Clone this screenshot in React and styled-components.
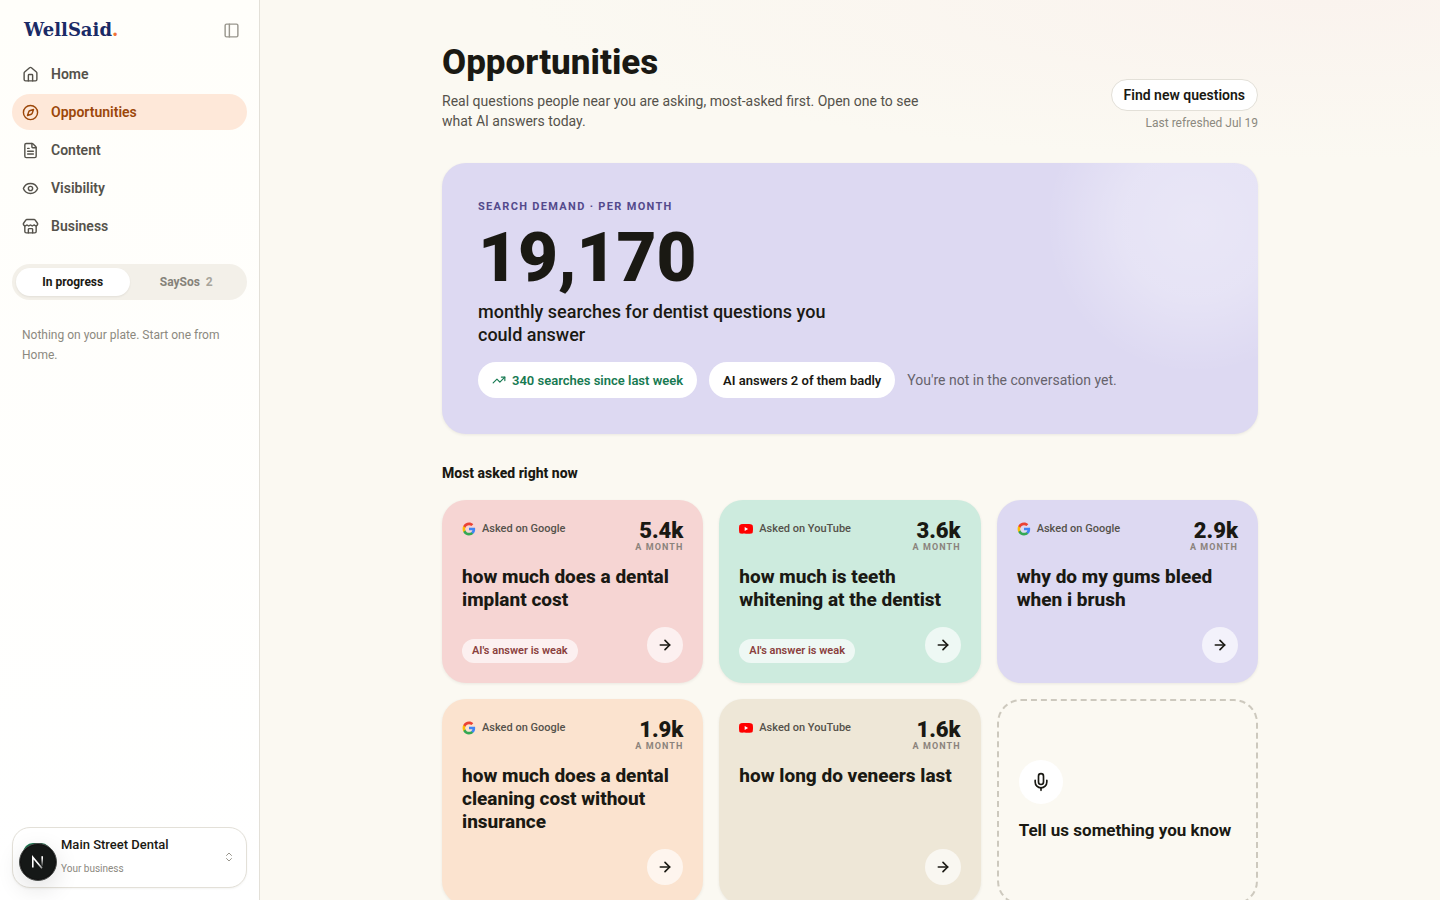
import React from 'react';
import styled, { createGlobalStyle, ThemeProvider } from 'styled-components';
import {
  ArrowRight,
  ChevronsUpDown,
  Compass,
  Eye,
  FileText,
  House,
  Mic,
  PanelLeft,
  Store,
  TrendingUp,
} from 'lucide-react';

const theme = {
  font: "Roboto, 'Liberation Sans', sans-serif",
  serif: "'DejaVu Serif', 'Liberation Serif', serif",
  ink: '#1a1913',
  inkSoft: '#55524b',
  inkMuted: '#8c897f',
  line: '#e3e0d8',
  page: '#fbf9f2',
  navy: '#1a2a66',
  accent: '#f07338',
  activeBg: '#fee8d9',
  activeText: '#9c4709',
  lavender: '#ddd9f2',
  pink: '#f6d5d3',
  mint: '#cdebde',
  peach: '#fbe3cf',
  sand: '#eee7d7',
};

const GlobalStyle = createGlobalStyle`
  *, *::before, *::after {
    box-sizing: border-box;
  }

  body {
    margin: 0;
    font-family: ${theme.font};
    color: ${theme.ink};
    background: ${theme.page};
  }

  button {
    font-family: inherit;
    color: inherit;
    border: 0;
    padding: 0;
    background: none;
    cursor: pointer;
  }

  h1, h2, h3, p {
    margin: 0;
  }
`;

const Shell = styled.div`
  display: flex;
  height: 100vh;
`;

/* ---------- sidebar ---------- */

const Sidebar = styled.aside`
  display: flex;
  flex-direction: column;
  flex: 0 0 260px;
  padding: 12px;
  background: linear-gradient(#fffefa, #ffffff);
  border-right: 1px solid ${({ theme }) => theme.line};
`;

const SidebarHeader = styled.div`
  display: flex;
  align-items: center;
  justify-content: space-between;
  height: 36px;
  margin-bottom: 8px;
  padding-left: 12px;
`;

const Wordmark = styled.a`
  font-family: ${({ theme }) => theme.serif};
  font-size: 18px;
  font-weight: 700;
  line-height: 28px;
  color: ${({ theme }) => theme.navy};
  text-decoration: none;

  span {
    color: ${({ theme }) => theme.accent};
  }
`;

const CollapseButton = styled.button`
  display: grid;
  place-items: center;
  width: 32px;
  height: 32px;
  color: #99968d;
`;

const Nav = styled.nav`
  display: flex;
  flex-direction: column;
  gap: 2px;
`;

const NavLink = styled.a`
  display: flex;
  align-items: center;
  gap: 12px;
  height: 36px;
  padding: 0 10px;
  border-radius: 18px;
  font-size: 14px;
  font-weight: 600;
  text-decoration: none;
  color: ${({ theme, $active }) => ($active ? theme.activeText : theme.inkSoft)};
  background: ${({ theme, $active }) => ($active ? theme.activeBg : 'transparent')};
`;

const Segmented = styled.div`
  display: flex;
  margin-top: 20px;
  padding: 4px;
  border-radius: 18px;
  background: #f3f0e9;
`;

const Segment = styled.button`
  flex: 1 1 0;
  height: 28px;
  border-radius: 14px;
  font-size: 12px;
  font-weight: 700;
  color: ${({ theme, $active }) => ($active ? theme.ink : '#85827a')};
  background: ${({ $active }) => ($active ? '#ffffff' : 'transparent')};
  box-shadow: ${({ $active }) => ($active ? '0 1px 2px rgba(40, 35, 20, 0.08)' : 'none')};
`;

const SegmentCount = styled.span`
  margin-left: 6px;
  color: #a8a59c;
`;

const EmptyNote = styled.p`
  margin-top: 25px;
  padding: 0 10px;
  font-size: 12px;
  line-height: 20px;
  color: ${({ theme }) => theme.inkMuted};
`;

const AccountButton = styled.button`
  display: flex;
  align-items: center;
  gap: 10px;
  margin-top: auto;
  padding: 8px 11px 9px 10px;
  border: 1px solid ${({ theme }) => theme.line};
  border-radius: 18px;
  text-align: left;
  background: #ffffff;
  box-shadow: 0 1px 2px rgba(40, 35, 20, 0.05);

  svg {
    margin-left: auto;
    color: #99968d;
  }
`;

const Avatar = styled.span`
  width: 28px;
  height: 28px;
  border-radius: 10px;
  background: #14794f;
`;

const AccountText = styled.span`
  display: flex;
  flex-direction: column;
  gap: 6px;
`;

const AccountName = styled.span`
  font-size: 13px;
  font-weight: 500;
  line-height: 18px;
`;

const AccountMeta = styled.span`
  font-size: 10px;
  line-height: 18px;
  color: ${({ theme }) => theme.inkMuted};
`;

/* floats above the page in the bottom left corner */
const DevBadge = styled.button`
  position: fixed;
  left: 19px;
  bottom: 19px;
  display: grid;
  place-items: center;
  width: 38px;
  height: 38px;
  border: 1px solid #4a4d4b;
  border-radius: 50%;
  background: #151817;
  box-shadow: 0 0 0 1px #111111 inset, 0 8px 24px rgba(0, 0, 0, 0.12);
`;

/* ---------- main column ---------- */

const Main = styled.main`
  flex: 1 1 0;
  min-width: 0;
  overflow-y: auto;
  scrollbar-width: none;
  background:
    radial-gradient(ellipse 800px 160px at 90% 0, #faf3ee, rgba(250, 243, 238, 0)),
    ${({ theme }) => theme.page};
`;

const Content = styled.div`
  max-width: 880px;
  margin: 0 auto;
  padding: 40px 32px;
`;

const PageHeader = styled.header`
  display: flex;
  align-items: flex-end;
  justify-content: space-between;
  gap: 24px;
  margin-bottom: 32px;
`;

const PageTitle = styled.h1`
  font-size: 35px;
  font-weight: 800;
  line-height: 45px;
`;

const PageIntro = styled.p`
  max-width: 490px;
  margin-top: 6px;
  font-size: 14px;
  line-height: 20px;
  color: ${({ theme }) => theme.inkSoft};
`;

const HeaderActions = styled.div`
  display: flex;
  flex-direction: column;
  align-items: flex-end;
  gap: 4px;
`;

const OutlineButton = styled.button`
  height: 32px;
  padding: 0 12px;
  border: 1px solid ${({ theme }) => theme.line};
  border-radius: 16px;
  font-size: 14px;
  font-weight: 600;
  background: #ffffff;
`;

const Refreshed = styled.span`
  font-size: 12px;
  line-height: 16px;
  color: ${({ theme }) => theme.inkMuted};
`;

const Hero = styled.section`
  padding: 36px;
  border-radius: 24px;
  background:
    radial-gradient(
      circle 150px at calc(100% - 62px) 60px,
      rgba(255, 255, 255, 0.36),
      rgba(255, 255, 255, 0.28) 50%,
      rgba(255, 255, 255, 0)
    ),
    ${({ theme }) => theme.lavender};
  box-shadow: 0 1px 3px rgba(40, 35, 20, 0.08);
`;

const Eyebrow = styled.p`
  font-size: 11px;
  font-weight: 700;
  line-height: 15px;
  letter-spacing: 0.12em;
  text-transform: uppercase;
  color: #534a8c;
`;

const HeroNumber = styled.p`
  margin-top: 8px;
  font-size: 69px;
  font-weight: 900;
  line-height: 72px;
`;

const HeroText = styled.p`
  max-width: 384px;
  margin: 6px 0 16px;
  font-size: 18px;
  font-weight: 500;
  line-height: 23px;
`;

const HeroFacts = styled.div`
  display: flex;
  flex-wrap: wrap;
  align-items: center;
  gap: 12px;
`;

const FactPill = styled.span`
  display: inline-flex;
  align-items: center;
  gap: 6px;
  height: 36px;
  padding: 0 14px;
  border-radius: 18px;
  font-size: 13px;
  font-weight: 600;
  color: ${({ theme, $up }) => ($up ? '#177a52' : theme.ink)};
  background: #ffffff;
`;

const FactNote = styled.span`
  font-size: 14px;
  color: #66636c;
`;

const SectionTitle = styled.h2`
  margin: 29px 0 17px;
  font-size: 14px;
  font-weight: 800;
  line-height: 20px;
`;

const CardGrid = styled.div`
  display: grid;
  grid-template-columns: repeat(3, minmax(0, 1fr));
  gap: 16px;
`;

const Card = styled.article`
  display: flex;
  flex-direction: column;
  padding: 20px;
  border-radius: 24px;
  background: ${({ theme, $tone }) => theme[$tone]};
  box-shadow: 0 1px 3px rgba(40, 35, 20, 0.08);
`;

const CardTop = styled.div`
  display: flex;
  align-items: flex-start;
  justify-content: space-between;
`;

const Source = styled.span`
  display: flex;
  align-items: center;
  gap: 6px;
  font-size: 11px;
  font-weight: 500;
  line-height: 18px;
  color: ${({ theme }) => theme.inkSoft};
`;

const Volume = styled.div`
  text-align: right;
`;

const VolumeNumber = styled.div`
  font-size: 22px;
  font-weight: 900;
  line-height: 22px;
`;

const VolumeUnit = styled.div`
  font-size: 9px;
  font-weight: 700;
  line-height: 11px;
  letter-spacing: 0.12em;
  text-transform: uppercase;
  color: #8b837c;
`;

const Question = styled.h3`
  margin: 12px 0 16px;
  font-size: 19px;
  font-weight: 800;
  line-height: 23px;
`;

const CardBottom = styled.div`
  display: flex;
  align-items: flex-end;
  justify-content: space-between;
  margin-top: auto;
`;

const WeakTag = styled.span`
  padding: 0 10px;
  border-radius: 12px;
  font-size: 11px;
  font-weight: 600;
  line-height: 24px;
  color: #8a403d;
  background: rgba(255, 255, 255, 0.65);
`;

const OpenButton = styled.button`
  display: grid;
  place-items: center;
  width: 36px;
  height: 36px;
  margin-left: auto;
  border-radius: 50%;
  background: rgba(255, 255, 255, 0.65);
`;

const TellCard = styled.button`
  display: flex;
  flex-direction: column;
  align-items: flex-start;
  justify-content: center;
  gap: 16px;
  padding: 20px 20px 23px;
  border: 2px dashed #cdc9be;
  border-radius: 24px;
  font-size: 17px;
  font-weight: 700;
  line-height: 21px;
  text-align: left;
`;

const MicCircle = styled.span`
  display: grid;
  place-items: center;
  width: 44px;
  height: 44px;
  border-radius: 50%;
  background: #ffffff;
`;

const GoogleLogo = () => (
  <svg width="14" height="14" viewBox="0 0 24 24" aria-hidden="true">
    <path fill="#4285F4" d="M22.56 12.25c0-.78-.07-1.53-.2-2.25H12v4.26h5.92c-.26 1.37-1.04 2.53-2.21 3.31v2.77h3.57c2.08-1.92 3.28-4.74 3.28-8.09z" />
    <path fill="#34A853" d="M12 23c2.97 0 5.46-.98 7.28-2.66l-3.57-2.77c-.98.66-2.23 1.06-3.71 1.06-2.86 0-5.29-1.93-6.16-4.53H2.18v2.84C3.99 20.53 7.7 23 12 23z" />
    <path fill="#FBBC05" d="M5.84 14.09c-.22-.66-.35-1.36-.35-2.09s.13-1.43.35-2.09V7.07H2.18C1.43 8.55 1 10.22 1 12s.43 3.45 1.18 4.93l3.66-2.84z" />
    <path fill="#EA4335" d="M12 5.38c1.62 0 3.06.56 4.21 1.64l3.15-3.15C17.45 2.09 14.97 1 12 1 7.7 1 3.99 3.47 2.18 7.07l3.66 2.84c.87-2.6 3.3-4.53 6.16-4.53z" />
  </svg>
);

const YouTubeLogo = () => (
  <svg width="14" height="14" viewBox="0 0 24 24" aria-hidden="true">
    <path fill="#FF0000" d="M23.5 6.2a3 3 0 0 0-2.1-2.1C19.5 3.5 12 3.5 12 3.5s-7.5 0-9.4.6A3 3 0 0 0 .5 6.2 31 31 0 0 0 0 12a31 31 0 0 0 .5 5.8 3 3 0 0 0 2.1 2.1c1.9.6 9.4.6 9.4.6s7.5 0 9.4-.6a3 3 0 0 0 2.1-2.1A31 31 0 0 0 24 12a31 31 0 0 0-.5-5.8z" />
    <path fill="#FFFFFF" d="M9.8 15.3V8.7l5.8 3.3z" />
  </svg>
);

const NextLogo = () => (
  <svg width="14" height="14" viewBox="0 0 14 14" fill="none" aria-hidden="true">
    <defs>
      <linearGradient id="stem" x1="0" y1="3" x2="0" y2="12" gradientUnits="userSpaceOnUse">
        <stop stopColor="#ffffff" />
        <stop offset="1" stopColor="#ffffff" stopOpacity="0" />
      </linearGradient>
      <linearGradient id="diagonal" x1="8" y1="8" x2="13" y2="14" gradientUnits="userSpaceOnUse">
        <stop stopColor="#ffffff" />
        <stop offset="1" stopColor="#ffffff" stopOpacity="0.4" />
      </linearGradient>
    </defs>
    <path stroke="url(#diagonal)" strokeWidth="1.6" d="M1.8 12.5V2.2l9.2 11" />
    <rect fill="url(#stem)" x="10.4" y="1.2" width="1.6" height="10" />
  </svg>
);

const navItems = [
  { label: 'Home', icon: House },
  { label: 'Opportunities', icon: Compass, active: true },
  { label: 'Content', icon: FileText },
  { label: 'Visibility', icon: Eye },
  { label: 'Business', icon: Store },
];

const questions = [
  { tone: 'pink', source: 'Google', volume: '5.4k', text: 'how much does a dental implant cost', weak: true },
  { tone: 'mint', source: 'YouTube', volume: '3.6k', text: 'how much is teeth whitening at the dentist', weak: true },
  { tone: 'lavender', source: 'Google', volume: '2.9k', text: 'why do my gums bleed when i brush' },
  { tone: 'peach', source: 'Google', volume: '1.9k', text: 'how much does a dental cleaning cost without insurance' },
  { tone: 'sand', source: 'YouTube', volume: '1.6k', text: 'how long do veneers last' },
];

const QuestionCard = ({ tone, source, volume, text, weak }) => (
  <Card $tone={tone}>
    <CardTop>
      <Source>
        {source === 'Google' ? <GoogleLogo /> : <YouTubeLogo />}
        Asked on {source}
      </Source>
      <Volume>
        <VolumeNumber>{volume}</VolumeNumber>
        <VolumeUnit>a month</VolumeUnit>
      </Volume>
    </CardTop>
    <Question>{text}</Question>
    <CardBottom>
      {weak && <WeakTag>AI's answer is weak</WeakTag>}
      <OpenButton aria-label={`Open ${text}`}>
        <ArrowRight size={16} strokeWidth={2.5} />
      </OpenButton>
    </CardBottom>
  </Card>
);

export default () => (
  <ThemeProvider theme={theme}>
    <GlobalStyle />
    <Shell>
      <Sidebar>
        <SidebarHeader>
          <Wordmark href="#">
            WellSaid<span>.</span>
          </Wordmark>
          <CollapseButton aria-label="Collapse sidebar">
            <PanelLeft size={17} />
          </CollapseButton>
        </SidebarHeader>
        <Nav>
          {navItems.map(({ label, icon: Icon, active }) => (
            <NavLink key={label} href="#" $active={active} aria-current={active ? 'page' : undefined}>
              <Icon size={17} />
              {label}
            </NavLink>
          ))}
        </Nav>
        <Segmented>
          <Segment $active>In progress</Segment>
          <Segment>
            SaySos<SegmentCount>2</SegmentCount>
          </Segment>
        </Segmented>
        <EmptyNote>Nothing on your plate. Start one from Home.</EmptyNote>
        <AccountButton>
          <Avatar />
          <AccountText>
            <AccountName>Main Street Dental</AccountName>
            <AccountMeta>Your business</AccountMeta>
          </AccountText>
          <ChevronsUpDown size={12} />
        </AccountButton>
      </Sidebar>
      <Main>
        <Content>
          <PageHeader>
            <div>
              <PageTitle>Opportunities</PageTitle>
              <PageIntro>
                Real questions people near you are asking, most-asked first. Open one to see what AI answers today.
              </PageIntro>
            </div>
            <HeaderActions>
              <OutlineButton>Find new questions</OutlineButton>
              <Refreshed>Last refreshed Jul 19</Refreshed>
            </HeaderActions>
          </PageHeader>
          <Hero>
            <Eyebrow>Search demand · per month</Eyebrow>
            <HeroNumber>19,170</HeroNumber>
            <HeroText>monthly searches for dentist questions you could answer</HeroText>
            <HeroFacts>
              <FactPill $up>
                <TrendingUp size={14} />
                340 searches since last week
              </FactPill>
              <FactPill>AI answers 2 of them badly</FactPill>
              <FactNote>You're not in the conversation yet.</FactNote>
            </HeroFacts>
          </Hero>
          <SectionTitle>Most asked right now</SectionTitle>
          <CardGrid>
            {questions.map((question) => (
              <QuestionCard key={question.text} {...question} />
            ))}
            <TellCard>
              <MicCircle>
                <Mic size={20} />
              </MicCircle>
              Tell us something you know
            </TellCard>
          </CardGrid>
        </Content>
      </Main>
    </Shell>
    <DevBadge aria-label="Open developer tools">
      <NextLogo />
    </DevBadge>
  </ThemeProvider>
);
